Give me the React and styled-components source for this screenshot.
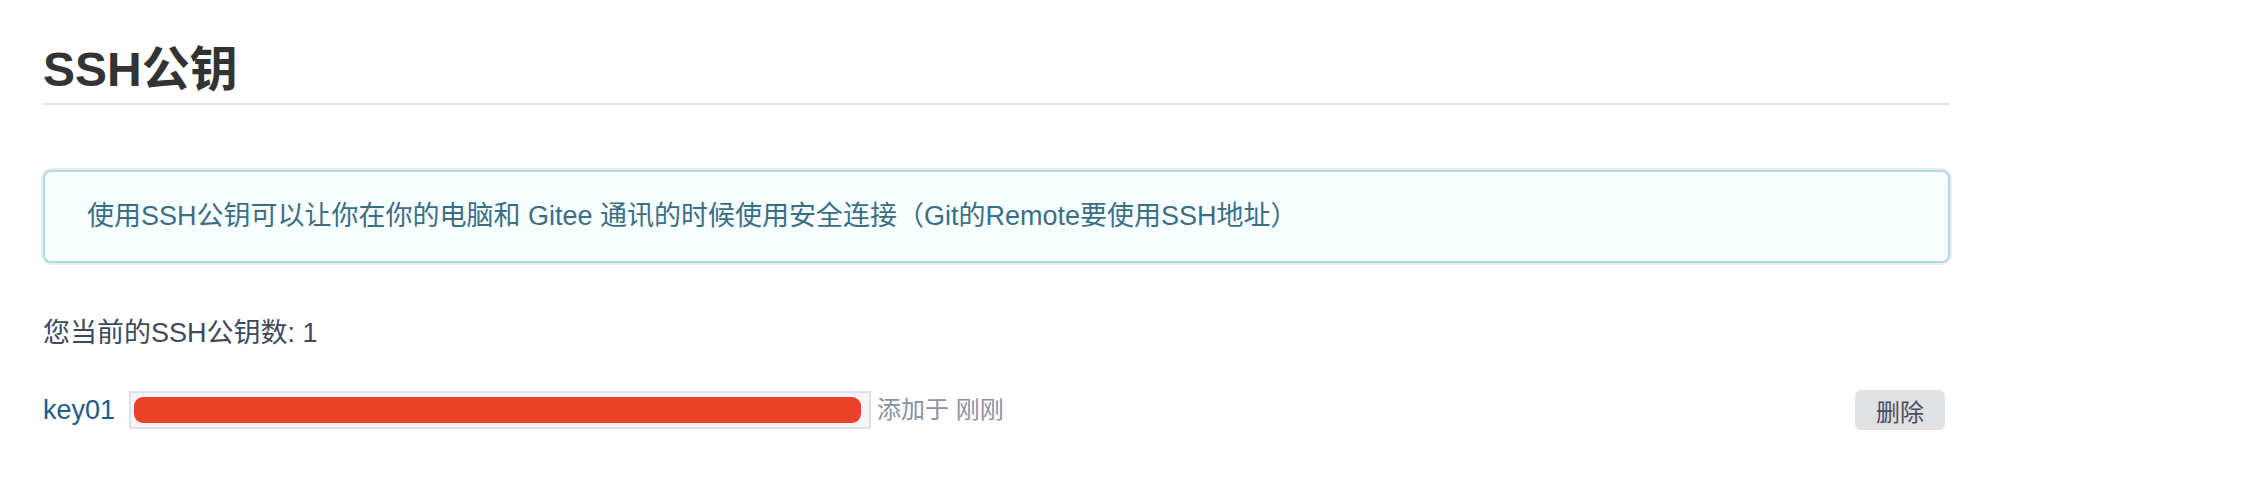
import React from 'react';
import styled, { createGlobalStyle } from 'styled-components';

const GlobalStyle = createGlobalStyle`
  body {
    margin: 0;
    background: #fff;
    font-family: "Liberation Sans", "Noto Sans CJK SC", sans-serif;
  }
`;

const Page = styled.div`
  width: 1907px;
  padding: 42px 0 40px 43px;
`;

const Title = styled.h2`
  margin: 0;
  padding-bottom: 6px;
  border-bottom: 2px solid #e4e4e4;
  font-size: 48px;
  line-height: 55px;
  font-weight: 700;
  color: #333;
`;

const InfoBox = styled.div`
  margin-top: 65px;
  padding: 24px 42px;
  border: 2px solid #b4d8e0;
  border-radius: 8px;
  box-shadow: 0 0 0 2px #e6eef0;
  background: #f8ffff;
  color: #3a6e86;
  font-size: 27px;
  line-height: 41px;
`;

const Count = styled.div`
  margin-top: 50px;
  font-size: 27px;
  line-height: 40px;
  color: #40485b;
`;

const KeyRow = styled.div`
  margin-top: 37px;
  display: flex;
  align-items: center;
  padding-right: 5px;
`;

const KeyName = styled.a`
  font-size: 27px;
  line-height: 40px;
  color: #1f5c85;
  text-decoration: none;
  margin-right: 14px;
`;

const KeyField = styled.div`
  box-sizing: border-box;
  width: 742px;
  height: 38px;
  padding: 4px 8px 4px 3px;
  border: 2px solid #e0e0e8;
  background: #f5f5f7;
`;

const Redacted = styled.div`
  height: 100%;
  background: #ea4129;
  border-radius: 9px;
`;

const AddedAt = styled.span`
  margin-left: 6px;
  font-size: 24px;
  line-height: 40px;
  color: #8a90a2;
`;

const DeleteButton = styled.button`
  margin-left: auto;
  width: 90px;
  height: 40px;
  padding: 0;
  border: none;
  border-radius: 6px;
  background: #e0e1e2;
  color: #484e61;
  font-family: inherit;
  font-size: 24px;
  cursor: pointer;
`;

const App = () => (
  <>
    <GlobalStyle />
    <Page>
      <Title>SSH公钥</Title>
      <InfoBox>
        使用SSH公钥可以让你在你的电脑和 Gitee 通讯的时候使用安全连接（Git的Remote要使用SSH地址）
      </InfoBox>
      <Count>您当前的SSH公钥数: 1</Count>
      <KeyRow>
        <KeyName href="#">key01</KeyName>
        <KeyField>
          <Redacted />
        </KeyField>
        <AddedAt>添加于 刚刚</AddedAt>
        <DeleteButton>删除</DeleteButton>
      </KeyRow>
    </Page>
  </>
);

export default App;
